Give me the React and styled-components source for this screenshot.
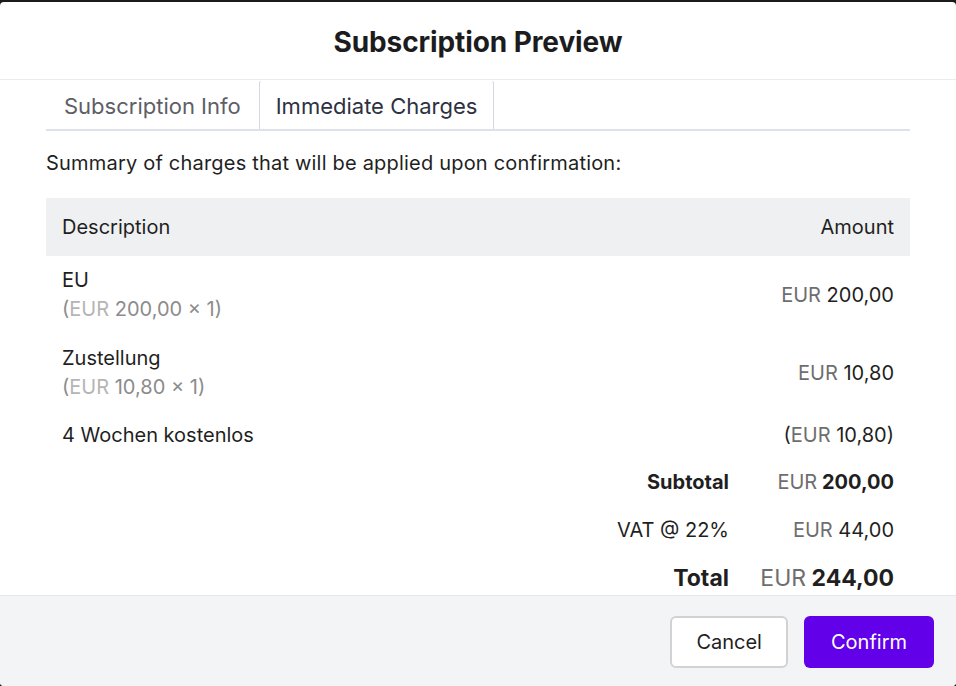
import React, { useState } from 'react'
import styled, { createGlobalStyle } from 'styled-components'

const GlobalStyle = createGlobalStyle`
  html, body {
    margin: 0;
    padding: 0;
    background: #1b1b1b;
    font-family: Inter, "Noto Sans", "Liberation Sans", sans-serif;
    color: #1f1f1f;
  }
  * { box-sizing: border-box; }
`

const Dialog = styled.div`
  margin-top: 2px;
  height: 684px;
  background: #fff;
  border-radius: 4px;
  overflow: hidden;
  display: flex;
  flex-direction: column;
`

const Header = styled.div`
  height: 78px;
  flex-shrink: 0;
  display: flex;
  align-items: center;
  justify-content: center;
  border-bottom: 1.5px solid #ebebeb;
`

const Title = styled.h1`
  margin: 2px 0 0;
  font-size: 28px;
  font-weight: 700;
  color: #1c1c1e;
  letter-spacing: -0.1px;
`

const Body = styled.div`
  flex: 1;
  overflow: hidden;
  padding: 0 46px;
`

const TabList = styled.div`
  display: flex;
  border-bottom: 2px solid #dce1ea;
`

const Tab = styled.button`
  height: 49px;
  padding: 2px 16px 0 16px;
  font-family: inherit;
  font-size: 22px;
  background: #fff;
  cursor: pointer;
  border: 1px solid ${(p) => (p.active ? '#d3d9e4' : 'transparent')};
  border-top-color: transparent;
  border-bottom: none;
  border-radius: 4px 4px 0 0;
  color: ${(p) => (p.active ? '#2d3142' : '#5d5e66')};
  &:first-child {
    padding: 2px 17px 0 17px;
  }
`

const Intro = styled.p`
  margin: 19px 0 22px;
  font-size: 20px;
  line-height: 26px;
  letter-spacing: 0.2px;
`

const Table = styled.table`
  width: 100%;
  border-collapse: collapse;
  font-size: 20px;
`

const Th = styled.th`
  height: 58px;
  background: #eff0f2;
  padding: 0 16px;
  font-weight: 400;
  text-align: ${(p) => (p.right ? 'right' : 'left')};
`

const Td = styled.td`
  padding: ${(p) => (p.compact ? '9px 16px 0' : '10px 16px')};
  line-height: 28px;
  vertical-align: middle;
  text-align: ${(p) => (p.right ? 'right' : 'left')};
`

const SubLine = styled.div`
  line-height: 30px;
  color: #8c8c8c;
`

const Cur = styled.span`
  color: ${(p) => (p.light ? '#b5b5b5' : '#6e6e6e')};
  font-weight: 400;
`

const Summary = styled.div`
  display: grid;
  grid-template-columns: 1fr 165px;
  justify-items: end;
  padding: 9px 16px 0;
`

const SumLabel = styled.div`
  height: 48px;
  display: flex;
  align-items: center;
  font-size: ${(p) => (p.big ? '23px' : '20px')};
  font-weight: ${(p) => (p.bold ? 700 : 400)};
`

const SumValue = styled(SumLabel)``

const Footer = styled.div`
  height: 91px;
  flex-shrink: 0;
  background: #f3f4f6;
  border-top: 1.5px solid #e2e8f0;
  display: flex;
  justify-content: flex-end;
  align-items: flex-start;
  gap: 16px;
  padding: 20px 22px 0;
`

const Button = styled.button`
  height: 52px;
  padding: 0 ${(p) => (p.primary ? '27px' : '24px')};
  font-family: inherit;
  font-size: 20px;
  border-radius: 6px;
  cursor: pointer;
  border: ${(p) => (p.primary ? 'none' : '2px solid #d2d2d2')};
  background: ${(p) => (p.primary ? '#6200ea' : '#fff')};
  color: ${(p) => (p.primary ? '#fff' : '#1f1f1f')};
`

const items = [
  { name: 'EU', price: '200,00', qty: 1 },
  { name: 'Zustellung', price: '10,80', qty: 1 },
]

const App = () => {
  const [tab, setTab] = useState(1)

  return (
    <>
      <GlobalStyle />
      <Dialog>
        <Header>
          <Title>Subscription Preview</Title>
        </Header>
        <Body>
          <TabList>
            <Tab active={tab === 0} onClick={() => setTab(0)}>Subscription Info</Tab>
            <Tab active={tab === 1} onClick={() => setTab(1)}>Immediate Charges</Tab>
          </TabList>
          <Intro>Summary of charges that will be applied upon confirmation:</Intro>
          <Table>
            <thead>
              <tr>
                <Th>Description</Th>
                <Th right>Amount</Th>
              </tr>
            </thead>
            <tbody>
              {items.map((it) => (
                <tr key={it.name}>
                  <Td>
                    {it.name}
                    <SubLine>
                      (<Cur light>EUR</Cur> {it.price} × {it.qty})
                    </SubLine>
                  </Td>
                  <Td right>
                    <Cur>EUR</Cur> {it.price}
                  </Td>
                </tr>
              ))}
              <tr>
                <Td compact>4 Wochen kostenlos</Td>
                <Td compact right>
                  (<Cur>EUR</Cur> 10,80)
                </Td>
              </tr>
            </tbody>
          </Table>
          <Summary>
            <SumLabel bold>Subtotal</SumLabel>
            <SumValue bold><Cur>EUR</Cur>&nbsp;200,00</SumValue>
            <SumLabel>VAT @ 22%</SumLabel>
            <SumValue><Cur>EUR</Cur>&nbsp;44,00</SumValue>
            <SumLabel bold big>Total</SumLabel>
            <SumValue bold big><Cur>EUR</Cur>&nbsp;244,00</SumValue>
          </Summary>
        </Body>
        <Footer>
          <Button>Cancel</Button>
          <Button primary>Confirm</Button>
        </Footer>
      </Dialog>
    </>
  )
}

export default App
